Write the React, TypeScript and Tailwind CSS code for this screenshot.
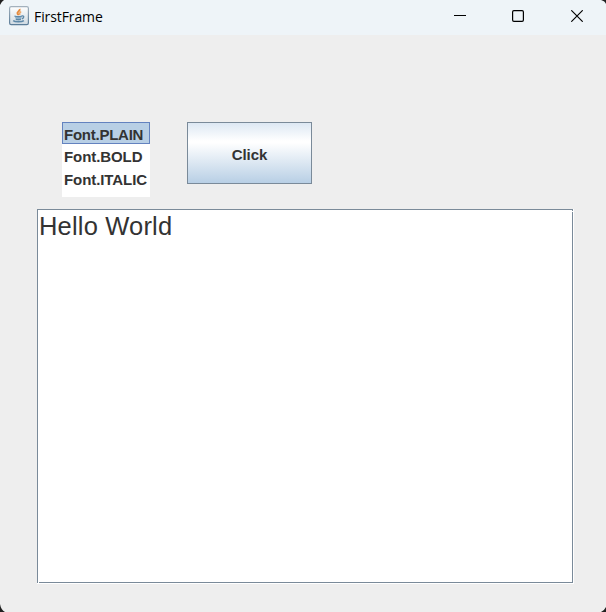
const styles = ['Font.PLAIN', 'Font.BOLD', 'Font.ITALIC'];

function JavaIcon() {
  return (
    <svg width="20" height="20" viewBox="0 0 20 20" fill="none">
      <defs>
        <linearGradient id="tile" x1="0" y1="0" x2="0" y2="1">
          <stop offset="0" stopColor="#ffffff" />
          <stop offset="1" stopColor="#cfdae2" />
        </linearGradient>
        <linearGradient id="edge" x1="0" y1="0" x2="0" y2="1">
          <stop offset="0" stopColor="#a3b1bd" />
          <stop offset="1" stopColor="#5b7d99" />
        </linearGradient>
      </defs>
      <rect x="0.6" y="0.6" width="18.8" height="18" rx="1.6" fill="url(#tile)" stroke="url(#edge)" strokeWidth="1.2" />
      <path d="M10.5 3c1.200 2-3.200 2.900-1.900 4.700.5.700.8.900.8 1.500" stroke="#e58a3c" strokeWidth="2" />
      <path d="M12.200 5.600c-2.400 1.200-1.600 2-1.300 3.200" stroke="#eda25f" strokeWidth="1.400" />
      <path d="M5.500 10c2 .6 5.600.6 7.400 0l-.8 3.300c-1.600.6-3.800.6-5.200 0z" fill="#8fb0c8" />
      <path d="M5.500 10c2 .6 5.600.6 7.400 0M6.800 13.300c1.600.5 3.700.5 5.100 0M12.900 10c2.600-.7 2.300 2.100 0 2.800" stroke="#5d88a8" strokeWidth="1.300" />
      <path d="M4.200 14.600c1.800 1.500 8.700 1.400 10.700 0" stroke="#5d88a8" strokeWidth="1.500" />
    </svg>
  );
}

function TitleBar() {
  return (
    <header className="flex h-[35px] items-start bg-[#eef4f8]">
      <div className="flex grow items-start pl-[9px] pt-1.5">
        <JavaIcon />
        <span className="ml-[5px] mt-px origin-left scale-y-[1.06] font-['Open_Sans','Noto_Sans',sans-serif] text-[14px] leading-5 tracking-[-0.1px] text-black">
          FirstFrame
        </span>
      </div>
      <div className="flex text-black">
        <button className="flex h-8 w-[58px] items-center justify-center" aria-label="Minimize">
          <svg width="12" height="12" shapeRendering="crispEdges">
            <path d="M0 5.500h12" stroke="currentColor" />
          </svg>
        </button>
        <button className="flex h-8 w-[58px] items-center justify-center" aria-label="Maximize">
          <svg width="12" height="12" fill="none">
            <rect x="0.600" y="0.600" width="10.800" height="10.800" rx="1.300" stroke="currentColor" strokeWidth="1.200" />
          </svg>
        </button>
        <button className="flex h-8 w-[59px] items-center justify-center" aria-label="Close">
          <svg width="12" height="12" fill="none">
            <path d="M0.300 0.300l11.400 11.400M11.700 0.300L0.300 11.700" stroke="currentColor" strokeWidth="1.150" />
          </svg>
        </button>
      </div>
    </header>
  );
}

export default function App() {
  return (
    <div className="relative flex h-[612px] w-[606px] flex-col overflow-hidden bg-[#eeeeee] font-['Liberation_Sans',Arial,sans-serif] text-[#333333]">
      <TitleBar />
      <main className="flex flex-col pl-[37px] pt-[87px]">
        <div className="flex h-[87px] items-start gap-[37px] pl-[25px]">
          <ul className="h-[75px] w-[88px] bg-white text-[15px] font-bold">
            {styles.map((name, i) => (
              <li
                key={name}
                className={
                  i === 0
                    ? 'h-[22px] border border-[#6382bf] bg-[#b8cfe5] pl-px leading-[23px] tracking-[-0.250px]'
                    : 'h-[23px] pl-0.5 leading-[25px] tracking-[-0.080px]'
                }
              >
                {name}
              </li>
            ))}
          </ul>
          <button className="h-[62px] w-[125px] border border-[#7a8a99] bg-[linear-gradient(180deg,#dde8f3_0%,#ffffff_30%,#ffffff_33%,#b8cfe5_100%)] pt-1 text-[15px] font-bold tracking-[-0.100px]">
            Click
          </button>
        </div>
        <div className="relative h-[375px] w-[537px] border-b border-r border-white">
          <div className="h-[374px] w-[536px] border border-[#7a8a99] bg-white pl-px text-[25.500px] leading-[33px] tracking-[0.180px]">
            Hello World
          </div>
          {/* highlight pixels that break the bevel at two corners */}
          <i className="absolute right-0 top-0.5 size-px bg-white" />
          <i className="absolute bottom-0 left-px size-px bg-white" />
        </div>
      </main>
      <svg className="pointer-events-none absolute inset-0" width="606" height="612" fill="#202020">
        <path d="M0 0h4Q1 2 0 5zM606 0h-5q4 1 5 4zM0 612v-8q1 6 5 8zM606 612v-5q-2 4-5 5z" />
      </svg>
    </div>
  );
}
